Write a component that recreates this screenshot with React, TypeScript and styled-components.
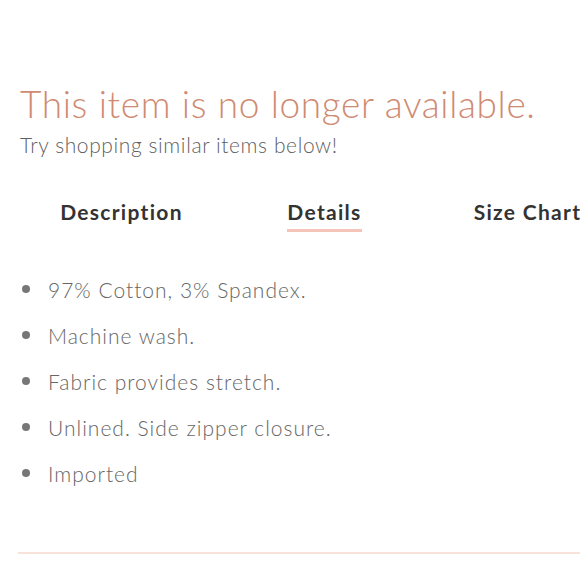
import styled, { createGlobalStyle } from "styled-components";

const GlobalStyle = createGlobalStyle`
body {
  margin: 0;
  background: #ffffff;
  font-family: Lato, "Noto Sans", sans-serif;
  overflow: hidden;
}
`;

const Page = styled.div`
width: 580px;
height: 580px;
overflow: hidden;
padding: 80px 0 0 20px;
box-sizing: border-box;
`;

const Title = styled.h1`
margin: 0;
font-weight: 300;
font-size: 37px;
line-height: 48px;
letter-spacing: 0.64px;
color: #cf8a72;
white-space: nowrap;
`;

const Subtitle = styled.p`
margin: 3px 0 0;
font-weight: 300;
font-size: 21px;
line-height: 28px;
letter-spacing: 0.6px;
color: #5f5f5f;
white-space: nowrap;
`;

const Tabs = styled.div`
display: flex;
margin-top: 39px;
`;

const Tab = styled.div`
flex: 0 0 203px;
display: flex;
justify-content: center;
`;

const TabLabel = styled.span<{ $active?: boolean }>`
font-weight: 700;
font-size: 21px;
line-height: 28px;
letter-spacing: 1.3px;
color: #333333;
white-space: nowrap;
padding-bottom: 3px;
border-bottom: 3px solid ${(p) => (p.$active ? "#f4c5b8" : "transparent")};
`;

const List = styled.ul`
list-style: none;
margin: 34px 0 0;
padding: 0;
`;

const Item = styled.li`
display: flex;
align-items: center;
gap: 18px;
height: 46px;
font-weight: 300;
font-size: 21px;
letter-spacing: 1px;
color: #666666;
&::before {
  content: "";
  width: 8px;
  height: 8px;
  border-radius: 50%;
  background: #777777;
  margin-left: 2px;
}
`;

const Divider = styled.hr`
margin: 56px 0 0 -2px;
border: none;
height: 2px;
background: #f8e3da;
`;

const details = [
  "97% Cotton, 3% Spandex.",
  "Machine wash.",
  "Fabric provides stretch.",
  "Unlined. Side zipper closure.",
  "Imported",
];

export default function App() {
  return (
    <Page>
      <GlobalStyle />
      <Title>This item is no longer available.</Title>
      <Subtitle>Try shopping similar items below!</Subtitle>
      <Tabs>
        <Tab><TabLabel>Description</TabLabel></Tab>
        <Tab><TabLabel $active>Details</TabLabel></Tab>
        <Tab><TabLabel>Size Chart</TabLabel></Tab>
      </Tabs>
      <List>
        {details.map((d) => (
          <Item key={d}>{d}</Item>
        ))}
      </List>
      <Divider />
    </Page>
  );
}
